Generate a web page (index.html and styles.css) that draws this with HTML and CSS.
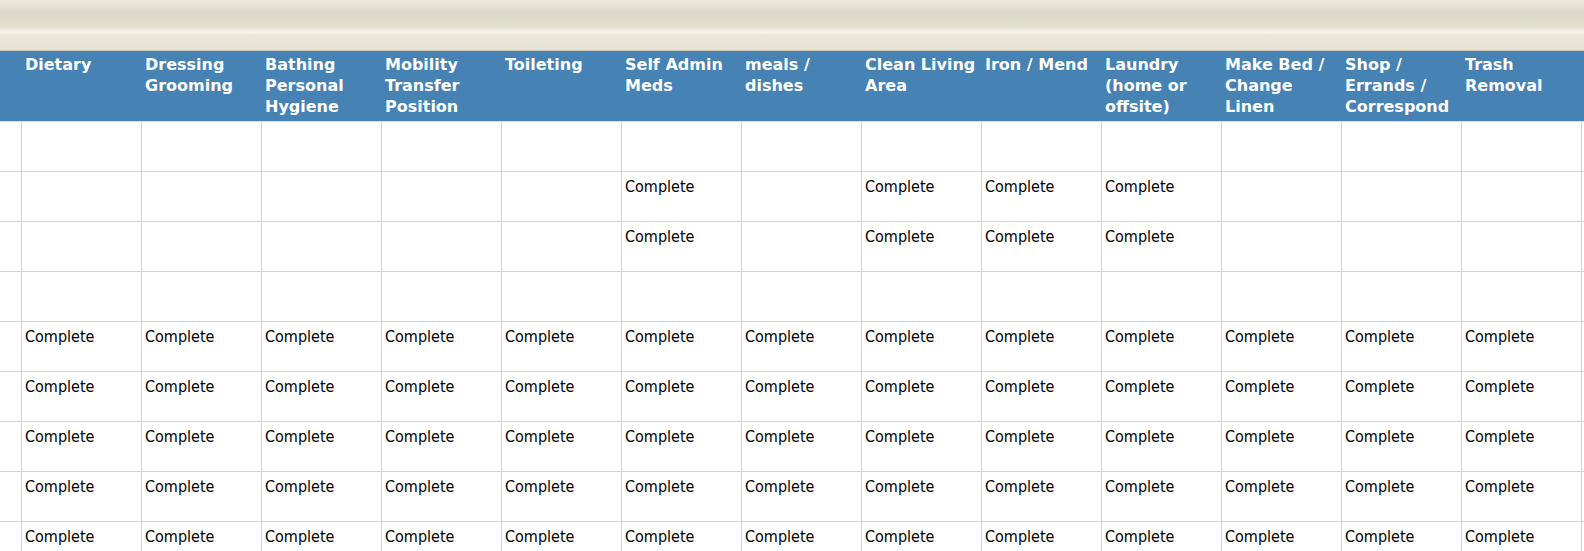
FILE: index.html
```html
<!DOCTYPE html>
<html lang="en">
<head>
  <meta charset="UTF-8"/>
  <title>ADL Tasks</title>
  <link rel="stylesheet" href="styles.css">
</head>
<body>
  <div class="toolbar"></div>

  <div class="grid-wrap">
    <table class="task-grid">
      <colgroup>
        <col class="col-edge">
        <col class="col-task" span="13">
        <col class="col-rest">
      </colgroup>
      <thead>
        <tr class="head-row">
          <th></th>
          <th>Dietary</th>
          <th>Dressing Grooming</th>
          <th>Bathing Personal Hygiene</th>
          <th>Mobility Transfer Position</th>
          <th>Toileting</th>
          <th>Self Admin Meds</th>
          <th>meals / dishes</th>
          <th>Clean Living Area</th>
          <th>Iron / Mend</th>
          <th>Laundry (home or offsite)</th>
          <th>Make Bed / Change Linen</th>
          <th>Shop / Errands / Correspond</th>
          <th>Trash Removal</th>
          <th></th>
        </tr>
      </thead>
      <tbody id="rows"></tbody>
    </table>
  </div>

  <script>
    // which task columns are marked complete, per row (column 1..13)
    const all = [1,2,3,4,5,6,7,8,9,10,11,12,13];
    const partial = [6,8,9,10];
    const rows = [[], partial, partial, [], all, all, all, all, all];

    const body = document.getElementById('rows');
    rows.forEach(done => {
      const tr = document.createElement('tr');
      for (let c = 0; c < 15; c++) {
        const td = document.createElement('td');
        if (done.includes(c)) td.textContent = 'Complete';
        tr.appendChild(td);
      }
      body.appendChild(tr);
    });
  </script>
</body>
</html>
```

FILE: styles.css
```css
* {
  margin: 0;
  padding: 0;
  box-sizing: border-box;
}
html, body {
  overflow: hidden;
  background: #ffffff;
}
body {
  font-family: "DejaVu Sans Condensed", "Liberation Sans", sans-serif;
  color: #000000;
}
.toolbar {
  height: 51px;
  border-bottom: 1px solid #c9c6ba;
  background: linear-gradient(to bottom,
    #ece9dc 0px,
    #dcd8c8 13px,
    #e2dfd0 26px,
    #f6f4ea 32px,
    #e9e6d7 35px,
    #e7e4d5 50px);
}
.grid-wrap {
  width: 100%;
  overflow: hidden;
}
.task-grid {
  border-collapse: separate;
  border-spacing: 0;
  table-layout: fixed;
  width: 100%;
}
.col-edge {
  width: 22px;
}
.col-task {
  width: 120px;
}
.head-row {
  height: 71px;
}
.task-grid th {
  background: #4682b4;
  color: #ffffff;
  font-family: "DejaVu Sans", "Liberation Sans", sans-serif;
  font-size: 16px;
  font-weight: bold;
  line-height: 21px;
  text-align: left;
  vertical-align: top;
  padding: 3px 3px 0 3px;
  border-bottom: 1px solid #d6dde4;
}
.task-grid tbody tr {
  height: 50px;
}
.task-grid td {
  font-size: 16px;
  line-height: 19px;
  vertical-align: top;
  padding: 5px 3px 0 3px;
  border-right: 1px solid #d3d3d3;
  border-bottom: 1px solid #d3d3d3;
  white-space: nowrap;
}
.task-grid td:last-child {
  border-right: none;
}
```
